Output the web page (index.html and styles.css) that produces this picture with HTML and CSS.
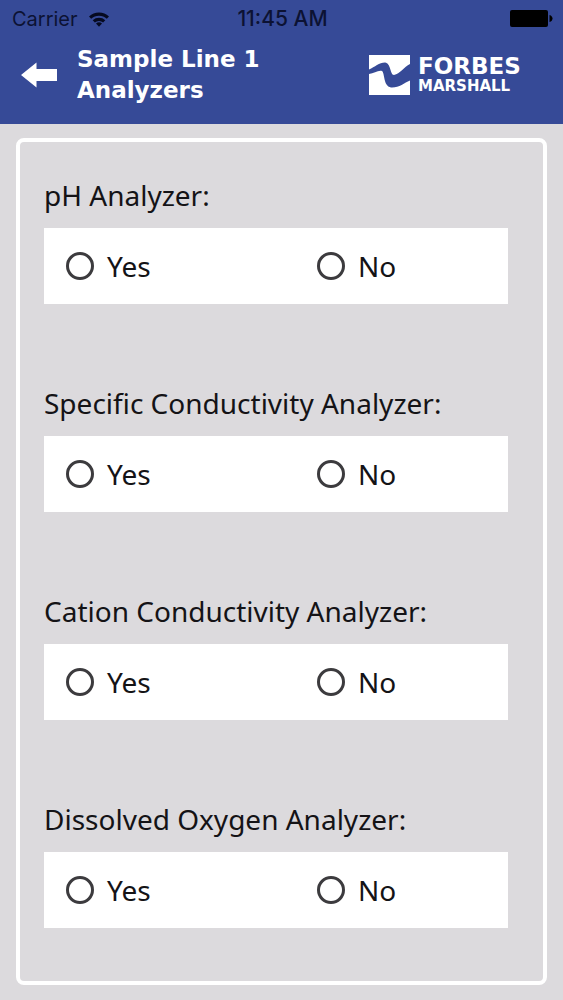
FILE: index.html
```html
<!DOCTYPE html>
<html lang="en">
<head>
    <meta charset="UTF-8">
    <meta name="viewport" content="width=device-width, initial-scale=1.0">
    <title>Sample Line 1 Analyzers</title>
    <link rel="stylesheet" href="styles.css">
</head>
<body>
    <header class="header">
        <div class="status-bar">
            <div class="carrier">
                <span>Carrier</span>
                <svg class="wifi" viewBox="0 0 22 16" aria-hidden="true">
                    <path d="M1 5.5a14.5 14.5 0 0 1 20 0l-2.2 2.3a11.3 11.3 0 0 0-15.6 0z"/>
                    <path d="M4.7 9.2a9.2 9.2 0 0 1 12.6 0l-2.2 2.3a6 6 0 0 0-8.2 0z"/>
                    <path d="M8 12.6a4.4 4.4 0 0 1 6 0L11 15.8z"/>
                </svg>
            </div>
            <div class="time">11:45 AM</div>
            <svg class="battery" viewBox="0 0 43 17" aria-hidden="true">
                <rect x="0" y="0" width="38" height="17" rx="2"/>
                <path d="M39.5 5c4 1 4 6 0 7z"/>
            </svg>
        </div>
        <div class="nav-bar">
            <button class="back" type="button" aria-label="Back">
                <svg viewBox="0 0 36 26" aria-hidden="true">
                    <path d="M0 13L15.5 0.5V7H36v12H15.5v6.5z"/>
                </svg>
            </button>
            <h1 class="title">Sample Line 1 Analyzers</h1>
            <div class="logo">
                <svg class="logo-mark" viewBox="0 0 41 40" aria-hidden="true">
                    <path d="M0 0H41V9C35 12 31 19 25 20C21 20 22 8 16 7.500C10 7.500 6 12 0 14.500Z"/>
                    <path d="M0 19C5 18.500 9 15 13 16C16 18 14 31 22 32.500C30 33 35 28 41 25.500V40H0Z"/>
                </svg>
                <div class="logo-text">
                    <span class="logo-name">FORBES</span>
                    <span class="logo-sub">MARSHALL</span>
                </div>
            </div>
        </div>
    </header>

    <main class="content">
        <form class="panel">
            <fieldset class="question">
                <legend>pH Analyzer:</legend>
                <div class="options">
                    <label><input type="radio" name="ph" value="yes">Yes</label>
                    <label><input type="radio" name="ph" value="no">No</label>
                </div>
            </fieldset>
            <fieldset class="question">
                <legend>Specific Conductivity Analyzer:</legend>
                <div class="options">
                    <label><input type="radio" name="specific" value="yes">Yes</label>
                    <label><input type="radio" name="specific" value="no">No</label>
                </div>
            </fieldset>
            <fieldset class="question">
                <legend>Cation Conductivity Analyzer:</legend>
                <div class="options">
                    <label><input type="radio" name="cation" value="yes">Yes</label>
                    <label><input type="radio" name="cation" value="no">No</label>
                </div>
            </fieldset>
            <fieldset class="question">
                <legend>Dissolved Oxygen Analyzer:</legend>
                <div class="options">
                    <label><input type="radio" name="oxygen" value="yes">Yes</label>
                    <label><input type="radio" name="oxygen" value="no">No</label>
                </div>
            </fieldset>
        </form>
    </main>
</body>
</html>
```

FILE: styles.css
```css
* {
    box-sizing: border-box;
}

body {
    margin: 0;
    font-family: Tahoma, "Noto Sans", sans-serif;
    background-color: #dcdadd;
    color: #141316;
}

.header {
    background-color: #364a97;
    padding-bottom: 14px;
}

.status-bar {
    display: grid;
    grid-template-columns: 1fr auto 1fr;
    align-items: center;
    height: 37px;
    padding: 0 10px 0 12px;
    font-family: Inter, sans-serif;
    font-size: 20px;
    color: #0c1233;
}

.carrier {
    display: flex;
    align-items: center;
    gap: 10px;
}

.wifi {
    width: 22px;
    height: 16px;
    fill: #060a20;
}

.time {
    font-size: 21px;
    font-weight: 500;
}

.battery {
    width: 43px;
    height: 17px;
    justify-self: end;
    fill: #000000;
}

.nav-bar {
    display: flex;
    align-items: center;
    padding: 7px 39px 4px 21px;
    color: #ffffff;
}

.back {
    width: 36px;
    padding: 0;
    margin-right: 20px;
    background: none;
    border: none;
    cursor: pointer;
}

.back svg {
    display: block;
    fill: #ffffff;
}

.title {
    width: 200px;
    margin: 0;
    font-family: "DejaVu Sans", Verdana, sans-serif;
    font-size: 23px;
    font-weight: bold;
    line-height: 31px;
}

.logo {
    display: flex;
    align-items: center;
    gap: 8px;
    margin-left: auto;
}

.logo-mark {
    width: 41px;
    height: 40px;
    fill: #ffffff;
}

.logo-text {
    display: flex;
    flex-direction: column;
    width: 106px;
    font-family: "DejaVu Sans", Verdana, sans-serif;
    font-weight: bold;
}

.logo-name {
    font-size: 23px;
    line-height: 23px;
}

.logo-sub {
    font-size: 15px;
    line-height: 17px;
}

.content {
    padding: 14px 16px;
}

.panel {
    padding: 32px 35px 53px 24px;
    border: 4px solid #ffffff;
    border-radius: 8px;
}

.question {
    min-width: 0;
    margin: 0 0 78px;
    padding: 0;
    border: none;
}

.question:last-child {
    margin-bottom: 0;
}

.question legend {
    padding: 0;
    margin-bottom: 12px;
    font-size: 28px;
    line-height: 42px;
}

.options {
    display: grid;
    grid-template-columns: 251px 1fr;
    padding: 0 22px;
    background-color: #ffffff;
}

.options label {
    display: flex;
    align-items: center;
    gap: 13px;
    height: 76px;
    font-size: 28px;
    cursor: pointer;
}

.options input {
    appearance: none;
    width: 28px;
    height: 28px;
    margin: 0;
    border: 3px solid #3c3b3e;
    border-radius: 50%;
}

.options input:checked {
    background: radial-gradient(#364a97 50%, #ffffff 55%);
}
```
